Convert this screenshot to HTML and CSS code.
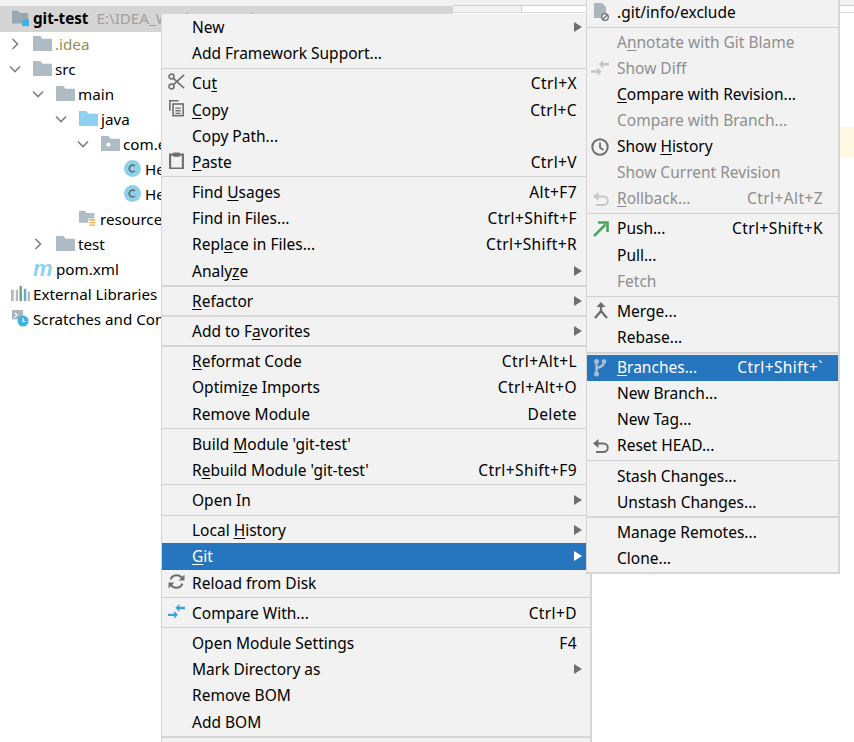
FILE: index.html
```html
<!DOCTYPE html>
<html lang="en">
<head>
<meta charset="utf-8">
<title>git-test</title>
<link rel="stylesheet" href="styles.css">
</head>
<body>
<svg class="defs" width="0" height="0" aria-hidden="true">
  <defs>
    <symbol id="chev-r" viewBox="0 0 12 12"><path d="M3.500 1 8.500 6 3.500 11" fill="none" stroke="#7f7f7f" stroke-width="1.600"/></symbol>
    <symbol id="chev-d" viewBox="0 0 12 12"><path d="M1 3.500 6 8.500 11 3.500" fill="none" stroke="#7f7f7f" stroke-width="1.600"/></symbol>
    <symbol id="folder" viewBox="0 0 18 16"><path d="M0 1h7l2 2.500h9V15H0z" fill="#b0bcc4"/></symbol>
    <symbol id="folder-blue" viewBox="0 0 18 16"><path d="M0 1h7l2 2.500h9V15H0z" fill="#8ed1ee"/></symbol>
    <symbol id="folder-pkg" viewBox="0 0 18 16"><path d="M0 1h7l2 2.500h9V15H0z" fill="#b0bcc4"/><circle cx="7" cy="9" r="2" fill="#fff"/></symbol>
    <symbol id="folder-res" viewBox="0 0 20 20"><path d="M0 1h7l2 2.500h9V15H0z" fill="#b0bcc4"/><path d="M11 10h9v10h-9z" fill="#fff"/><path d="M12 11h7v1.500h-7zM12 14h7v1.500h-7zM12 17h7v1.500h-7z" fill="#e8a94c"/></symbol>
    <symbol id="module" viewBox="0 0 20 20"><path d="M0 1h7l2 2.500h10V16H0z" fill="#9aa7b0"/><path d="M12 11h8v8h-8z" fill="#3fb1e3"/></symbol>
    <symbol id="cls" viewBox="0 0 18 18"><circle cx="9" cy="9" r="9" fill="#8fd0e9"/><path d="M11.500 6.500A3.500 3.500 0 1 0 11.500 11.500" fill="none" stroke="#5a6469" stroke-width="1.400"/></symbol>
    <symbol id="libs" viewBox="0 0 20 16"><path d="M0 4h3v12H0zM5 4h2.500v12H5z" fill="#b0bcc4"/><path d="M9 0h2.500v16H9z" fill="#6f9e7a"/><path d="M13.500 3H16v13h-2.500z" fill="#5fa9cf"/><path d="M17.500 6H20v10h-2.500z" fill="#b0bcc4"/></symbol>
    <symbol id="scratch" viewBox="0 0 20 20"><path d="M0 0h13v11H0z" fill="#aab6be"/><path d="M3 3l3 3-3 3" fill="none" stroke="#fff" stroke-width="1.200"/><circle cx="13" cy="13" r="6.500" fill="#3fb1e3"/><path d="M13 9.500V13.500h3" fill="none" stroke="#fff" stroke-width="1.300"/></symbol>
    <symbol id="cut" viewBox="0 0 18 18"><g fill="none" stroke="#6e6e6e" stroke-width="1.700"><circle cx="3.700" cy="3.700" r="2.600"/><circle cx="3.700" cy="14.300" r="2.600"/><path d="M5.500 5.500 17 16M5.500 12.500 17 2"/></g></symbol>
    <symbol id="copy" viewBox="0 0 16 16"><path d="M1 0h9v1.500H2.500V10H1z" fill="#6e6e6e"/><path d="M4 3h11v12.500H4z" fill="#6e6e6e"/><path d="M5.500 4.500h8v9.500h-8z" fill="#f2f2f2"/><path d="M7 7h5v1.300H7zM7 9.500h5v1.300H7zM7 12h5v1.200H7z" fill="#6e6e6e"/></symbol>
    <symbol id="paste" viewBox="-1 0 16 16"><path d="M1 2.500h12v13H1z" fill="none" stroke="#6e6e6e" stroke-width="2"/><path d="M4 0.500h6v4H4z" fill="#6e6e6e"/></symbol>
    <symbol id="reload" viewBox="0 0 16 16"><g fill="none" stroke="#6e6e6e" stroke-width="2"><path d="M13.500 5.500A6 6 0 0 0 2.500 6"/><path d="M2.500 10.500A6 6 0 0 0 13.500 10"/></g><path d="M15.500 1.500V7h-5.500zM.5 14.500V9H6z" fill="#6e6e6e"/></symbol>
    <symbol id="compare" viewBox="0 0 18 18"><path d="M8 5 12 1v3h6v2.500h-6V9.500z" fill="#3c9fd6"/><path d="M10.500 12.500 6.500 8.500v2.800H0v2.500h6.500v3z" fill="#3c9fd6"/></symbol>
    <symbol id="compare-off" viewBox="0 0 18 18"><path d="M8 5 12 1v3h6v2.500h-6V9.500z" fill="#c4c4c4"/><path d="M10.500 12.500 6.500 8.500v2.800H0v2.500h6.500v3z" fill="#c4c4c4"/></symbol>
    <symbol id="clock" viewBox="0 0 18 18"><circle cx="9" cy="9" r="7.700" fill="none" stroke="#6e6e6e" stroke-width="2"/><path d="M9 4.500V9.500L12.500 12" fill="none" stroke="#6e6e6e" stroke-width="1.800"/></symbol>
    <symbol id="undo" viewBox="-2 -2 18 18"><path d="M4 4.500h6.500a4 4 0 0 1 0 8.500H3" fill="none" stroke="#6e6e6e" stroke-width="2"/><path d="M5.500 0v9L0 4.500z" fill="#6e6e6e"/></symbol>
    <symbol id="undo-off" viewBox="-2 -2 18 18"><path d="M4 4.500h6.500a4 4 0 0 1 0 8.500H3" fill="none" stroke="#c8c8c8" stroke-width="2"/><path d="M5.500 0v9L0 4.500z" fill="#c8c8c8"/></symbol>
    <symbol id="push" viewBox="-2 -1 18 18"><path d="M1 15 12.500 3.500" stroke="#4ea25f" stroke-width="2.500" fill="none"/><path d="M5 1.500h9.500V11" stroke="#4ea25f" stroke-width="2.600" fill="none"/></symbol>
    <symbol id="merge" viewBox="-2 0 18 18"><path d="M8 2v7L2 16M8 9l6 7" fill="none" stroke="#6e6e6e" stroke-width="2.300"/><path d="M3.500 5 8 0l4.500 5z" fill="#6e6e6e"/></symbol>
    <symbol id="branch" viewBox="-3 0 18 18"><g fill="#a8bdd2"><circle cx="2.500" cy="2.500" r="2.500"/><circle cx="2.500" cy="15" r="2.500"/><circle cx="10" cy="2.500" r="2.300"/></g><path d="M2.500 2v13M10 3c0 4-3.500 5-7.500 6" fill="none" stroke="#a8bdd2" stroke-width="2.400"/></symbol>
    <symbol id="exclude" viewBox="-2 0 18 18"><path d="M1 0h8l4 4v11H1z" fill="#aab6be"/><circle cx="12" cy="14" r="3.300" fill="#f2f2f2" stroke="#6e6e6e" stroke-width="1.300"/><path d="M9.800 16.200 14.200 11.800" stroke="#6e6e6e" stroke-width="1.300"/></symbol>
    <symbol id="tail" viewBox="0 0 18 4"><path d="M0 0h18v4H0z" fill="#cfcfcf"/></symbol>
  </defs>
</svg>

<div class="topbar">
  <div class="topbar-left"></div>
  <div class="topbar-right"></div>
</div>

<main class="workspace">
  <section class="tree">
    <div class="row row-selected d0">
      <svg class="ic"><use href="#module"/></svg>
      <span class="label-bold">git-test</span><span class="path">E:\IDEA_WorkSpace\git-test</span>
    </div>
    <div class="row d1"><svg class="chev"><use href="#chev-r"/></svg><svg class="ic"><use href="#folder"/></svg><span class="label-ignored">.idea</span></div>
    <div class="row d1"><svg class="chev"><use href="#chev-d"/></svg><svg class="ic"><use href="#folder"/></svg><span>src</span></div>
    <div class="row d2"><svg class="chev"><use href="#chev-d"/></svg><svg class="ic"><use href="#folder"/></svg><span>main</span></div>
    <div class="row d3"><svg class="chev"><use href="#chev-d"/></svg><svg class="ic"><use href="#folder-blue"/></svg><span>java</span></div>
    <div class="row d4"><svg class="chev"><use href="#chev-d"/></svg><svg class="ic"><use href="#folder-pkg"/></svg><span>com.example</span></div>
    <div class="row d5"><svg class="ic"><use href="#cls"/></svg><span>HelloController</span></div>
    <div class="row d5"><svg class="ic"><use href="#cls"/></svg><span>HelloWorld</span></div>
    <div class="row d4-leaf"><svg class="ic"><use href="#folder-res"/></svg><span>resources</span></div>
    <div class="row d2"><svg class="chev"><use href="#chev-r"/></svg><svg class="ic"><use href="#folder"/></svg><span>test</span></div>
    <div class="row d1-leaf"><span class="maven">m</span><span>pom.xml</span></div>
    <div class="row d0"><svg class="ic"><use href="#libs"/></svg><span>External Libraries</span></div>
    <div class="row d0"><svg class="ic"><use href="#scratch"/></svg><span>Scratches and Consoles</span></div>
  </section>
  <section class="editor">
    <div class="tabs"><div class="tab"></div></div>
    <div class="editor-highlight"></div>
  </section>
</main>

<nav class="menu menu-main">
  <div class="item"><span class="lb">New</span><i class="arrow"></i></div>
  <div class="item"><span class="lb">Add Framework Support...</span></div>
  <hr class="sep">
  <div class="item"><svg class="mi"><use href="#cut"/></svg><span class="lb">Cu<u>t</u></span><span class="key">Ctrl+X</span></div>
  <div class="item"><svg class="mi"><use href="#copy"/></svg><span class="lb"><u>C</u>opy</span><span class="key">Ctrl+C</span></div>
  <div class="item"><span class="lb">Copy Path...</span></div>
  <div class="item"><svg class="mi"><use href="#paste"/></svg><span class="lb"><u>P</u>aste</span><span class="key">Ctrl+V</span></div>
  <hr class="sep">
  <div class="item"><span class="lb">Find <u>U</u>sages</span><span class="key">Alt+F7</span></div>
  <div class="item"><span class="lb">Find in Files...</span><span class="key">Ctrl+Shift+F</span></div>
  <div class="item"><span class="lb">Repl<u>a</u>ce in Files...</span><span class="key">Ctrl+Shift+R</span></div>
  <div class="item"><span class="lb">Analy<u>z</u>e</span><i class="arrow"></i></div>
  <hr class="sep sep-thick">
  <div class="item"><span class="lb"><u>R</u>efactor</span><i class="arrow"></i></div>
  <hr class="sep sep-thick">
  <div class="item"><span class="lb">Add to F<u>a</u>vorites</span><i class="arrow"></i></div>
  <hr class="sep sep-thick">
  <div class="item"><span class="lb"><u>R</u>eformat Code</span><span class="key">Ctrl+Alt+L</span></div>
  <div class="item"><span class="lb">Optimi<u>z</u>e Imports</span><span class="key">Ctrl+Alt+O</span></div>
  <div class="item"><span class="lb">Remove Module</span><span class="key">Delete</span></div>
  <hr class="sep">
  <div class="item"><span class="lb">Build <u>M</u>odule 'git-test'</span></div>
  <div class="item"><span class="lb">R<u>e</u>build Module 'git-test'</span><span class="key">Ctrl+Shift+F9</span></div>
  <hr class="sep">
  <div class="item"><span class="lb">Open In</span><i class="arrow"></i></div>
  <hr class="sep">
  <div class="item"><span class="lb">Local <u>H</u>istory</span><i class="arrow"></i></div>
  <div class="item item-active"><span class="lb"><u>G</u>it</span><i class="arrow"></i></div>
  <div class="item"><svg class="mi"><use href="#reload"/></svg><span class="lb">Reload from Disk</span></div>
  <hr class="sep">
  <div class="item"><svg class="mi"><use href="#compare"/></svg><span class="lb">Compare With...</span><span class="key">Ctrl+D</span></div>
  <hr class="sep">
  <div class="item"><span class="lb">Open Module Settings</span><span class="key">F4</span></div>
  <div class="item"><span class="lb">Mark Directory as</span><i class="arrow"></i></div>
  <div class="item"><span class="lb">Remove BOM</span></div>
  <div class="item"><span class="lb">Add BOM</span></div>
  <hr class="sep sep-thick">
  <div class="item"><svg class="mi"><use href="#tail"/></svg></div>
</nav>

<nav class="menu menu-sub">
  <div class="item"><svg class="mi"><use href="#exclude"/></svg><span class="lb">.git/info/exclude</span></div>
  <hr class="sep">
  <div class="item off"><span class="lb">A<u>n</u>notate with Git Blame</span></div>
  <div class="item off"><svg class="mi"><use href="#compare-off"/></svg><span class="lb">Show Diff</span></div>
  <div class="item"><span class="lb"><u>C</u>ompare with Revision...</span></div>
  <div class="item off"><span class="lb">Compare with Branch...</span></div>
  <div class="item"><svg class="mi"><use href="#clock"/></svg><span class="lb">Show <u>H</u>istory</span></div>
  <div class="item off"><span class="lb">Show Current Revision</span></div>
  <div class="item off"><svg class="mi"><use href="#undo-off"/></svg><span class="lb"><u>R</u>ollback...</span><span class="key">Ctrl+Alt+Z</span></div>
  <hr class="sep">
  <div class="item"><svg class="mi"><use href="#push"/></svg><span class="lb">Push...</span><span class="key">Ctrl+Shift+K</span></div>
  <div class="item"><span class="lb">Pull...</span></div>
  <div class="item off"><span class="lb">Fetch</span></div>
  <hr class="sep">
  <div class="item"><svg class="mi"><use href="#merge"/></svg><span class="lb">Merge...</span></div>
  <div class="item"><span class="lb">Rebase...</span></div>
  <hr class="sep sep-thick">
  <div class="item item-active"><svg class="mi"><use href="#branch"/></svg><span class="lb"><u>B</u>ranches...</span><span class="key">Ctrl+Shift+`</span></div>
  <div class="item"><span class="lb">New Branch...</span></div>
  <div class="item"><span class="lb">New Tag...</span></div>
  <div class="item"><svg class="mi"><use href="#undo"/></svg><span class="lb">Reset HEAD...</span></div>
  <hr class="sep">
  <div class="item"><span class="lb">Stash Changes...</span></div>
  <div class="item"><span class="lb">Unstash Changes...</span></div>
  <hr class="sep sep-thick">
  <div class="item"><span class="lb">Manage Remotes...</span></div>
  <div class="item"><span class="lb">Clone...</span></div>
</nav>
</body>
</html>
```

FILE: styles.css
```css
* { box-sizing: border-box; }
html, body { margin: 0; padding: 0; }
body {
  position: relative;
  width: 854px;
  height: 742px;
  overflow: hidden;
  background: #fff;
  font-family: "Noto Sans", "Open Sans", sans-serif;
  font-size: 15.5px;
  color: #000;
}
.defs { position: absolute; }

.topbar { display: flex; height: 6px; background: #f2f2f2; }
.topbar-left { width: 453px; }
.topbar-right { flex: 1; border-bottom: 1px solid #d0d0d0; }

.workspace { display: flex; height: 736px; }
.tree { width: 453px; font-size: 15.2px; }
.editor { flex: 1; }
.tabs { display: flex; height: 7px; border-bottom: 1px solid #d8d8d8; }
.tab { width: 69px; background: #f2f2f2; border-right: 1px solid #d0d0d0; }
.editor-highlight { height: 30px; margin-top: 114px; background: #fff8e3; }

.row {
  display: flex;
  align-items: center;
  height: 25px;
  padding-bottom: 2px;
  white-space: nowrap;
}
.row-selected { height: 26px; background: #d5d5d5; }
.d0 { padding-left: 11px; }
.d1 { padding-left: 9px; }
.d2 { padding-left: 32px; }
.d3 { padding-left: 55px; }
.d4 { padding-left: 77px; }
.d5 { padding-left: 123px; }
.d4-leaf { padding-left: 78px; }
.d1-leaf { padding-left: 33px; }

.chev { width: 12px; height: 12px; margin-right: 12px; flex: none; }
.ic { width: 19px; height: 17px; margin-right: 3px; flex: none; }
.maven {
  width: 23px;
  font: italic 700 22px/20px "Liberation Sans", sans-serif;
  color: #8ed1ee;
}
.label-bold { font-weight: 700; }
.path { margin-left: 8px; color: #a0a0a0; }
.label-ignored { color: #8f8f4f; }

.menu {
  position: absolute;
  background: #f2f2f2;
  border: 2px solid #d6d6d6;
  border-left-width: 1px;
  white-space: nowrap;
}
.menu-main { left: 161px; top: 14px; width: 431px; height: 740px; border-bottom: 0; border-top: 0; }
.menu-sub { left: 586px; top: -3px; width: 254px; }

.item {
  position: relative;
  display: flex;
  align-items: center;
  height: 26.1px;
  padding: 0 15px 1px 30px;
}
.menu-main .item { height: 26.15px; padding-right: 13px; padding-bottom: 0; }
.mi {
  position: absolute;
  left: 4px;
  top: 4px;
  width: 18px;
  height: 18px;
}
.menu-main .mi { left: 6px; top: 3px; width: 17px; height: 17px; }
.lb { flex: 1; }
.key { margin-left: 16px; letter-spacing: 0.4px; }
.arrow {
  width: 0;
  height: 0;
  margin-right: -5px;
  border-left: 8px solid #6e6e6e;
  border-top: 5px solid transparent;
  border-bottom: 5px solid transparent;
}
.sep { height: 4.1px; margin: 0; border: 0; position: relative; background: transparent; }
.sep::after { content: ""; position: absolute; left: 0; right: 0; top: 1.5px; height: 1px; background: #d0d0d0; }
.sep-thick::after { top: 1px; height: 2px; background: #d6d6d6; }
.item-active { background: #2675bf; color: #fff; }
.item-active .arrow { border-left-color: #fff; }
.off { color: #8e8e8e; }
u { text-underline-offset: 2px; text-decoration-thickness: 1px; }
```
